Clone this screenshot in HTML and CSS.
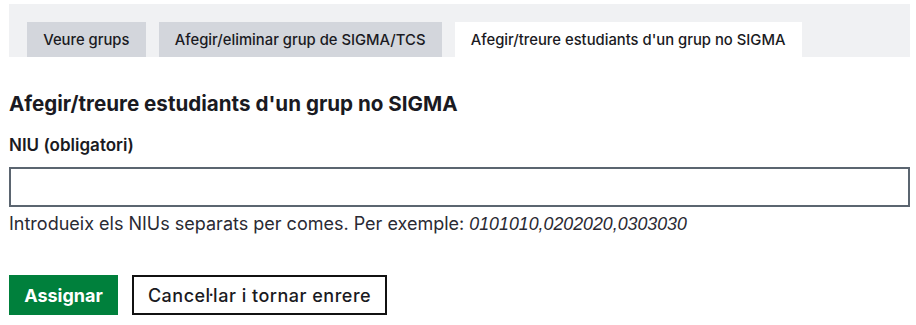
FILE: index.html
```html
<!DOCTYPE html>
<html lang="ca">
<head>
<meta charset="utf-8">
<link rel="stylesheet" href="styles.css">
</head>
<body>
<div class="page">
  <nav class="tabbar">
    <a class="tab">Veure grups</a>
    <a class="tab">Afegir/eliminar grup de SIGMA/TCS</a>
    <a class="tab active">Afegir/treure estudiants d'un grup no SIGMA</a>
  </nav>
  <h2 class="title">Afegir/treure estudiants d'un grup no SIGMA</h2>
  <form class="form">
    <label class="label" for="niu">NIU (obligatori)</label>
    <input class="input" id="niu" type="text">
    <p class="help">Introdueix els NIUs separats per comes. Per exemple: <em>0101010,0202020,0303030</em></p>
    <div class="actions">
      <button type="button" class="btn primary">Assignar</button>
      <button type="button" class="btn secondary">Cancel·lar i tornar enrere</button>
    </div>
  </form>
</div>
</body>
</html>
```
FILE: styles.css
```css
html, body {
  margin: 0;
  padding: 0;
  background: #fff;
}
body {
  font-family: Inter, "Noto Sans", sans-serif;
  color: #1a1a22;
}
.page {
  padding: 4px 6px 0 9px;
}
.tabbar {
  display: flex;
  gap: 13px;
  background: #f0f1f3;
  padding: 18px 18px 0 18px;
  height: 35px;
}
.tab {
  display: flex;
  align-items: center;
  padding: 0 16.2px;
  height: 35px;
  background: #d3d6dc;
  font-size: 14.8px;
  font-weight: 500;
  color: #1a1a22;
  white-space: nowrap;
}
.tab.active {
  background: #fff;
}
.title {
  margin: 35px 0 0 0;
  font-size: 20.6px;
  font-weight: 700;
  line-height: 24px;
}
.form {
  display: flex;
  flex-direction: column;
}
.label {
  margin-top: 18px;
  font-size: 17px;
  font-weight: 600;
  line-height: 22px;
}
.input {
  margin-top: 11px;
  height: 40px;
  box-sizing: border-box;
  border: 2.5px solid #5b6570;
  border-radius: 0;
  padding: 0 10px;
  font: inherit;
}
.help {
  margin: 6px 0 0 0;
  font-size: 18px;
  line-height: 22px;
  color: #2a2a33;
}
.help em {
  font-family: "Liberation Sans", Arial, sans-serif;
  font-style: italic;
  font-size: 17.8px;
}
.actions {
  display: flex;
  gap: 14px;
  margin-top: 40px;
}
.btn {
  height: 40px;
  box-sizing: border-box;
  font-family: inherit;
  border-radius: 0;
  cursor: pointer;
  padding: 0;
}
.primary {
  width: 109px;
  background: #00803c;
  color: #fff;
  border: none;
  font-size: 18px;
  font-weight: 700;
}
.secondary {
  width: 255px;
  background: #fff;
  color: #1a1a22;
  border: 2px solid #111;
  font-size: 18px;
  letter-spacing: 0.5px;
  font-weight: 500;
}
```
